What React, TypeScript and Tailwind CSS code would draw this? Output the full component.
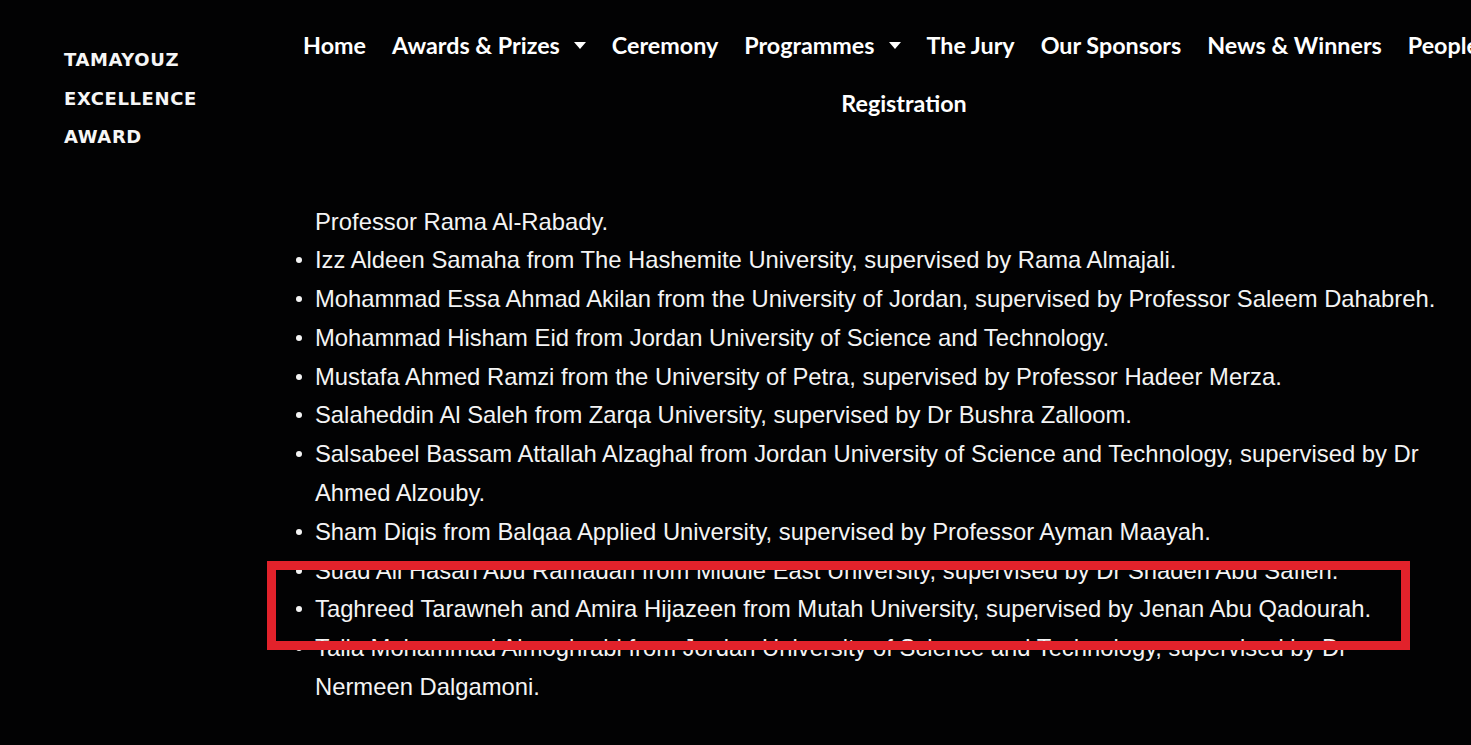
import { Fragment } from "react";

const navItems = [
  { label: "Home" },
  { label: "Awards & Prizes", caret: true },
  { label: "Ceremony" },
  { label: "Programmes", caret: true },
  { label: "The Jury" },
  { label: "Our Sponsors" },
  { label: "News & Winners" },
  { label: "People", caret: true },
  { label: "Registration" },
];

const winners = [
  "Izz Aldeen Samaha from The Hashemite University, supervised by Rama Almajali.",
  "Mohammad Essa Ahmad Akilan from the University of Jordan, supervised by Professor Saleem Dahabreh.",
  "Mohammad Hisham Eid from Jordan University of Science and Technology.",
  "Mustafa Ahmed Ramzi from the University of Petra, supervised by Professor Hadeer Merza.",
  "Salaheddin Al Saleh from Zarqa University, supervised by Dr Bushra Zalloom.",
  "Salsabeel Bassam Attallah Alzaghal from Jordan University of Science and Technology, supervised by Dr Ahmed Alzouby.",
  "Sham Diqis from Balqaa Applied University, supervised by Professor Ayman Maayah.",
  "Suad Ali Hasan Abu Ramadan from Middle East University, supervised by Dr Shaden Abu Safieh.",
  "Taghreed Tarawneh and Amira Hijazeen from Mutah University, supervised by Jenan Abu Qadourah.",
  "Talia Mohammad Almoghrabi from Jordan University of Science and Technology, supervised by Dr Nermeen Dalgamoni.",
];

function Caret() {
  return (
    <svg width="12" height="8" viewBox="0 0 12 8" className="ml-[14px] mt-[2px]" aria-hidden>
      <path d="M0 0 H12 L6 7 Z" fill="currentColor" />
    </svg>
  );
}

export default function App() {
  return (
    <div className="relative h-[745px] w-[1471px] overflow-hidden bg-[#020203] text-white">
      <header className="flex items-start">
        <div className="w-[289px] shrink-0 pl-[64px] pt-[41px] font-['DejaVu_Sans',sans-serif] text-[18px] font-bold uppercase leading-[38.5px] tracking-[0.6px] text-[#f6f6f6]">
          <div>Tamayouz</div>
          <div>Excellence</div>
          <div>Award</div>
        </div>
        <nav className="w-[1230px] shrink-0 pt-[16px]">
          <ul className="flex flex-wrap justify-center font-['Lato',sans-serif] text-[23.3px] font-bold">
            {navItems.map((item) => (
              <li key={item.label} className="flex h-[58px] items-center px-[13px] whitespace-nowrap">
                <span>{item.label}</span>
                {item.caret && <Caret />}
              </li>
            ))}
          </ul>
        </nav>
      </header>

      <main className="pt-[46px] pl-[296px]">
        <ul className="w-[1145px] font-['Liberation_Sans',Arial,sans-serif] text-[23.8px] leading-[38.8px] text-[#f4f4f4]">
          <li className="pl-[19px]">Professor Rama Al-Rabady.</li>
          {winners.map((w) => (
            <Fragment key={w}>
              <li className="flex">
                <span className="mt-[16px] mr-[13px] h-[6px] w-[6px] shrink-0 rounded-full bg-[#f4f4f4]" />
                <span>{w}</span>
              </li>
            </Fragment>
          ))}
        </ul>
      </main>

      <div className="pointer-events-none absolute left-[267px] top-[561px] h-[89px] w-[1143px] border-[9px] border-[#e2222b]" />
    </div>
  );
}
